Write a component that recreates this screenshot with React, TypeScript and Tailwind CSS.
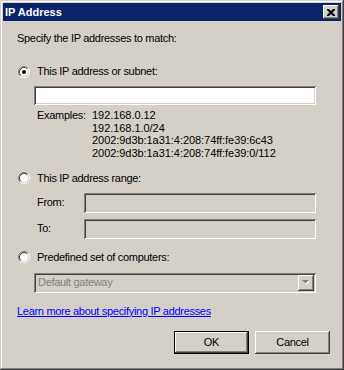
import React from "react";

const raised =
  "bg-[#d4d0c8] shadow-[inset_-1px_-1px_#404040,inset_1px_1px_#ffffff,inset_-2px_-2px_#808080,inset_2px_2px_#d4d0c8]";
const sunken =
  "shadow-[inset_1px_1px_#808080,inset_-1px_-1px_#ffffff,inset_2px_2px_#404040,inset_-2px_-2px_#d4d0c8]";

const Radio = ({ checked }: { checked?: boolean }) => (
  <svg width="12" height="12" viewBox="0 0 12 12" className="shrink-0">
    <circle cx="6" cy="6" r="4.5" fill="#fff" />
    <path d="M2.11 9.89 A5.5 5.5 0 0 1 9.89 2.11" fill="none" stroke="#808080" />
    <path d="M9.89 2.11 A5.5 5.5 0 0 1 2.11 9.89" fill="none" stroke="#ffffff" />
    <path d="M2.82 9.18 A4.5 4.5 0 0 1 9.18 2.82" fill="none" stroke="#404040" />
    <path d="M9.18 2.82 A4.5 4.5 0 0 1 2.82 9.18" fill="none" stroke="#d4d0c8" />
    {checked && <circle cx="6" cy="6" r="2" fill="#000" />}
  </svg>
);

const RadioRow = ({ label, checked }: { label: string; checked?: boolean }) => (
  <div className="flex items-center h-[13px] pl-px gap-[7px]">
    <Radio checked={checked} />
    <span>{label}</span>
  </div>
);

const Field = ({ disabled, className }: { disabled?: boolean; className: string }) => (
  <div className={`${sunken} ${disabled ? "bg-[#d4d0c8]" : "bg-white"} h-[20px] ${className}`} />
);

export default function App() {
  return (
    <div
      className="w-[344px] h-[370px] bg-[#d4d0c8] p-[3px] text-[11px] leading-[13px] tracking-[-0.3px] text-black shadow-[inset_-1px_-1px_#404040,inset_1px_1px_#d4d0c8,inset_-2px_-2px_#808080,inset_2px_2px_#ffffff]"
      style={{ fontFamily: '"Liberation Sans", Arial, sans-serif' }}
    >
      {/* title bar */}
      <div className="h-[18px] bg-[#0a246a] flex items-center justify-between pl-[2px] pr-[2px]">
        <span className="text-white font-bold tracking-normal">IP Address</span>
        <div className={`${raised} w-[16px] h-[14px] flex items-center justify-center`}>
          <svg width="8" height="7" viewBox="0 0 8 7">
            <path
              d="M0 0h2l2 2 2-2h2v1l-2.5 2.5L8 6v1H6L4 5 2 7H0V6l2.5-2.5L0 1z"
              fill="#000"
            />
          </svg>
        </div>
      </div>

      <div className="pl-[14px] pt-px">
        <p className="mt-[10px]">Specify the IP addresses to match:</p>

        <div className="mt-[20px]">
          <RadioRow label="This IP address or subnet:" checked />
        </div>
        <Field className="mt-[8px] ml-[17px] w-[282px] !h-[19px]" />

        <div className="mt-[4px] ml-[20px] flex leading-[12.7px]">
          <span className="w-[55px]">Examples:</span>
          <div className="flex flex-col tracking-[-0.05px]">
            <span>192.168.0.12</span>
            <span>192.168.1.0/24</span>
            <span>2002:9d3b:1a31:4:208:74ff:fe39:6c43</span>
            <span>2002:9d3b:1a31:4:208:74ff:fe39:0/112</span>
          </div>
        </div>

        <div className="mt-[12px]">
          <RadioRow label="This IP address range:" />
        </div>
        <div className="mt-[8px] ml-[20px] flex items-center">
          <span className="w-[47px]">From:</span>
          <Field disabled className="w-[232px]" />
        </div>
        <div className="mt-[6px] ml-[20px] flex items-center">
          <span className="w-[47px]">To:</span>
          <Field disabled className="w-[232px]" />
        </div>

        <div className="mt-[12px]">
          <RadioRow label="Predefined set of computers:" />
        </div>
        <div className={`${sunken} mt-[9px] ml-[17px] w-[282px] h-[20px] bg-[#d4d0c8] flex items-center justify-between pl-[4px] pr-[2px]`}>
          <span className="text-[#808080]">Default gateway</span>
          <div className={`${raised} w-[16px] h-[16px] flex items-center justify-center`}>
            <svg width="8" height="5" viewBox="0 0 8 5">
              <path d="M1 1h7L4.5 4.5z" fill="#ffffff" />
              <path d="M0 0h7L3.5 3.5z" fill="#808080" />
            </svg>
          </div>
        </div>

        <p className="mt-[12px] text-[#0000ff] underline">Learn more about specifying IP addresses</p>
      </div>

      <div className="mt-[13px] flex justify-end gap-[6px] pr-[11px]">
        <button className="w-[75px] h-[23px] border border-black bg-[#d4d0c8] p-0">
          <div className={`${raised} w-full h-full flex items-center justify-center`}>OK</div>
        </button>
        <button className={`${raised} w-[75px] h-[23px] flex items-center justify-center`}>Cancel</button>
      </div>
    </div>
  );
}
